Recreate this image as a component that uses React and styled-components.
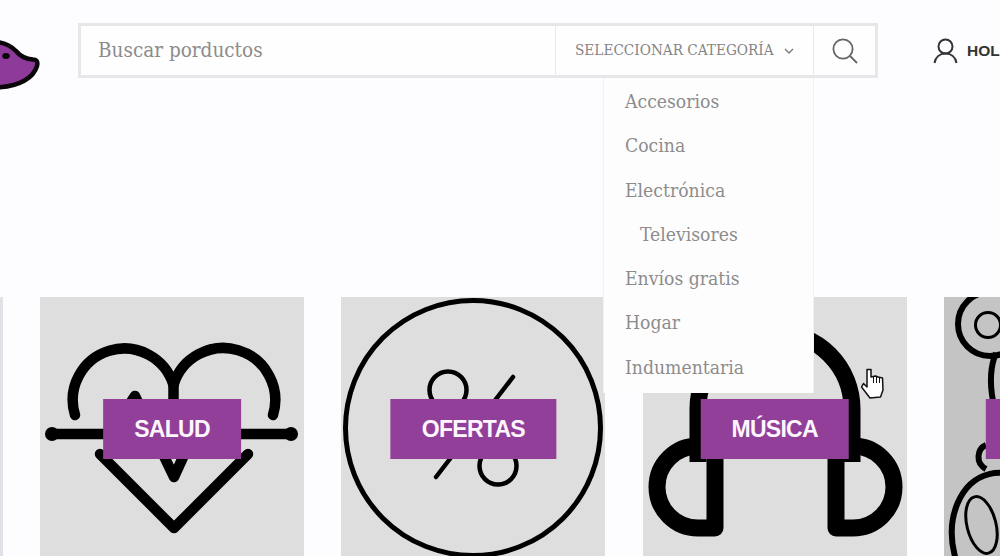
import React from "react";
import styled, { createGlobalStyle } from "styled-components";

const categories = [
  { name: "Accesorios" },
  { name: "Cocina" },
  { name: "Electrónica" },
  { name: "Televisores", child: true },
  { name: "Envíos gratis" },
  { name: "Hogar" },
  { name: "Indumentaria" },
];

const App = () => {
  return (
    <>
      <GlobalStyle />
      <Page>
        <Header>
          <Logo viewBox="0 0 40 50">
            <path
              d="M-8 2 C2 1.5 10 5 16 11 C20 16 26 19 33 19.5 C37 19.5 38 22 37 26 C34 36 22 47.5 -8 47.5 Z"
              fill="#8e3a9a"
              stroke="#0a060a"
              strokeWidth="4.5"
              strokeLinejoin="round"
            />
            <ellipse cx="6" cy="16" rx="3.8" ry="3" fill="#0a060a" />
          </Logo>
          <SearchBar>
            <SearchInput>Buscar porductos</SearchInput>
            <CategorySelect>
              <SelectLabel>SELECCIONAR CATEGORÍA</SelectLabel>
              <Chevron viewBox="0 0 10 6">
                <path d="M1 1 L5 5 L9 1" />
              </Chevron>
              <Dropdown>
                {categories.map((c) => (
                  <DropdownItem key={c.name} $child={c.child}>
                    {c.name}
                  </DropdownItem>
                ))}
              </Dropdown>
            </CategorySelect>
            <SearchButton>
              <SearchIcon viewBox="0 0 26 26">
                <circle cx="11" cy="11" r="9.6" />
                <path d="M18 18 L25 25" />
              </SearchIcon>
            </SearchButton>
          </SearchBar>
          <UserBox>
            <UserIcon viewBox="0 0 25 26">
              <circle cx="12.5" cy="8.5" r="7" />
              <path d="M1.5 25 C2.5 19 7 15.5 12.5 15.5 C18 15.5 22.5 19 23.5 25" />
            </UserIcon>
            <UserName>HOLA</UserName>
          </UserBox>
        </Header>

        <Shelf>
          <Tile $tone="#e4e0e8" />

          <Tile>
            <Art viewBox="0 0 264 264">
              <g fill="none" stroke="#000" strokeWidth="10.5" strokeLinecap="round" strokeLinejoin="round">
                <path d="M35 118 A50.5 50.5 0 1 1 133.5 88 A50.5 50.5 0 1 1 233 118" />
                <path d="M12 137 H251" />
                <path d="M133.5 85 V130" />
                <path d="M70 137 L95 99 L134 180 L150 145" />
                <path d="M60 157 L134 231 L208 157" />
              </g>
              <circle cx="12" cy="137" r="7" />
              <circle cx="251" cy="137" r="7" />
            </Art>
            <Badge>SALUD</Badge>
          </Tile>

          <Tile>
            <Art viewBox="0 0 264 264">
              <g fill="none" stroke="#000" strokeLinecap="round">
                <circle cx="132" cy="131" r="127.5" strokeWidth="5" />
                <circle cx="107" cy="93" r="18.5" strokeWidth="4.5" />
                <circle cx="157" cy="169" r="18.5" strokeWidth="4.5" />
                <path d="M172 80 L95 180" strokeWidth="4.5" />
              </g>
            </Art>
            <Badge>OFERTAS</Badge>
          </Tile>

          <Tile>
            <Art viewBox="0 0 264 264">
              <g fill="none" stroke="#000" strokeWidth="17" strokeLinejoin="round">
                <path d="M55 165 V112 A77 77 0 0 1 209 112 V165" />
                <path d="M72 149 V231 H55 A41 41 0 0 1 55 149 H72" />
                <path d="M193 149 V231 H210 A41 41 0 0 0 210 149 H193" />
              </g>
            </Art>
            <Badge>MÚSICA</Badge>
          </Tile>

          <Tile $tone="#c4c4c4">
            <Art viewBox="0 0 264 264">
              <g fill="none" stroke="#000">
                <circle cx="46" cy="27" r="32" strokeWidth="6" />
                <circle cx="44" cy="28" r="12.5" strokeWidth="3" />
                <path d="M52 56 C46 70 46 88 49 104" strokeWidth="6" />
                <path d="M42 148 C33 152 31 166 42 172" strokeWidth="6" />
                <ellipse cx="62" cy="245" rx="53" ry="70" transform="rotate(-14 62 245)" strokeWidth="6" />
                <ellipse cx="37.5" cy="228" rx="14.5" ry="29" transform="rotate(-14 37.5 228)" strokeWidth="3" />
              </g>
            </Art>
            <Badge>JUGUETES</Badge>
          </Tile>
        </Shelf>

        <HandCursor viewBox="0 0 24 32">
          <path
            d="M6 1.5 H10 V9 L14.5 8 L17 9 L21.5 10 L22 22 L19.5 29 L9 30 L5.5 25.5 L0.5 19 L2.5 15.5 L6 19 Z"
            fill="#fff"
            stroke="#111"
            strokeWidth="1.5"
            strokeLinejoin="round"
          />
          <path d="M12.5 9 V15 M15.5 9 V15 M18.5 10 V15" fill="none" stroke="#111" strokeWidth="1" />
        </HandCursor>
      </Page>
    </>
  );
};

const GlobalStyle = createGlobalStyle`
  html, body {
    margin: 0;
    padding: 0;
    background: #fdfcfe;
  }
`;

const slab = `"DejaVu Serif", "Liberation Serif", serif`;

const Page = styled.div`
  position: relative;
  width: 1000px;
  height: 556px;
  overflow: hidden;
  background: #fdfcfe;
`;

const Header = styled.header`
  display: flex;
  align-items: flex-start;
  padding-top: 23px;
`;

const Logo = styled.svg`
  flex: none;
  width: 40px;
  height: 50px;
  margin: 17px 38px 0 0;
`;

const SearchBar = styled.div`
  flex: none;
  display: flex;
  box-sizing: border-box;
  width: 800px;
  height: 55px;
  border: 3px solid #e7e7e9;
  background: #fefefe;
`;

const SearchInput = styled.div`
  flex: 1;
  padding-left: 17px;
  font: 20.5px/49px ${slab};
  font-stretch: condensed;
  color: #8c8c8c;
`;

const CategorySelect = styled.div`
  position: relative;
  flex: none;
  display: flex;
  align-items: center;
  box-sizing: border-box;
  width: 259px;
  padding: 1px 0 0 19px;
  border-left: 1px solid #e9e9eb;
  border-right: 1px solid #e9e9eb;
`;

const SelectLabel = styled.span`
  font: 15.2px/1 ${slab};
  font-stretch: condensed;
  color: #858585;
  white-space: nowrap;
`;

const Chevron = styled.svg`
  width: 10px;
  height: 6px;
  margin-left: 10px;
  fill: none;
  stroke: #777;
  stroke-width: 1.3;
`;

const Dropdown = styled.ul`
  position: absolute;
  z-index: 2;
  top: 100%;
  right: -1px;
  box-sizing: border-box;
  width: 211px;
  margin: 3px 0 0;
  padding: 2px 0 3px 21px;
  list-style: none;
  border-left: 1px solid #f2f1f4;
  border-right: 1px solid #f2f1f4;
  background: #fefdfe;
`;

const DropdownItem = styled.li`
  height: 44.3px;
  padding-left: ${(p) => (p.$child ? "15px" : "0")};
  font: 19.2px/44px ${slab};
  font-stretch: condensed;
  color: #8c8c8c;
`;

const SearchButton = styled.div`
  flex: none;
  width: 61px;
  display: flex;
  align-items: center;
  justify-content: center;
`;

const SearchIcon = styled.svg`
  width: 26px;
  height: 26px;
  fill: none;
  stroke: #666;
  stroke-width: 1.8;
`;

const UserBox = styled.div`
  flex: none;
  display: flex;
  align-items: center;
  height: 55px;
  margin-left: 55px;
  white-space: nowrap;
`;

const UserIcon = styled.svg`
  width: 25px;
  height: 26px;
  margin: 1px 9px 0 0;
  fill: none;
  stroke: #333;
  stroke-width: 2;
`;

const UserName = styled.span`
  font: bold 15.5px/1 "Liberation Sans", Arial, sans-serif;
  color: #333;
`;

const Shelf = styled.section`
  display: flex;
  gap: 37.33px;
  margin: 207px 0 0 -261.3px;
`;

const Tile = styled.article`
  position: relative;
  flex: none;
  width: 264px;
  height: 264px;
  background: ${(p) => p.$tone || "#dedede"};
`;

const Art = styled.svg`
  display: block;
  width: 264px;
  height: 264px;
`;

const Badge = styled.span`
  position: absolute;
  top: 50%;
  left: 50%;
  transform: translate(-50%, -50%);
  padding: 0 31px;
  background: #923f99;
  color: #fdf6fd;
  font: bold 23px/60px "Liberation Sans", Arial, sans-serif;
  letter-spacing: -0.7px;
  white-space: nowrap;
`;

const HandCursor = styled.svg`
  position: absolute;
  z-index: 3;
  top: 368px;
  left: 861px;
  width: 24px;
  height: 32px;
`;

export default App;
